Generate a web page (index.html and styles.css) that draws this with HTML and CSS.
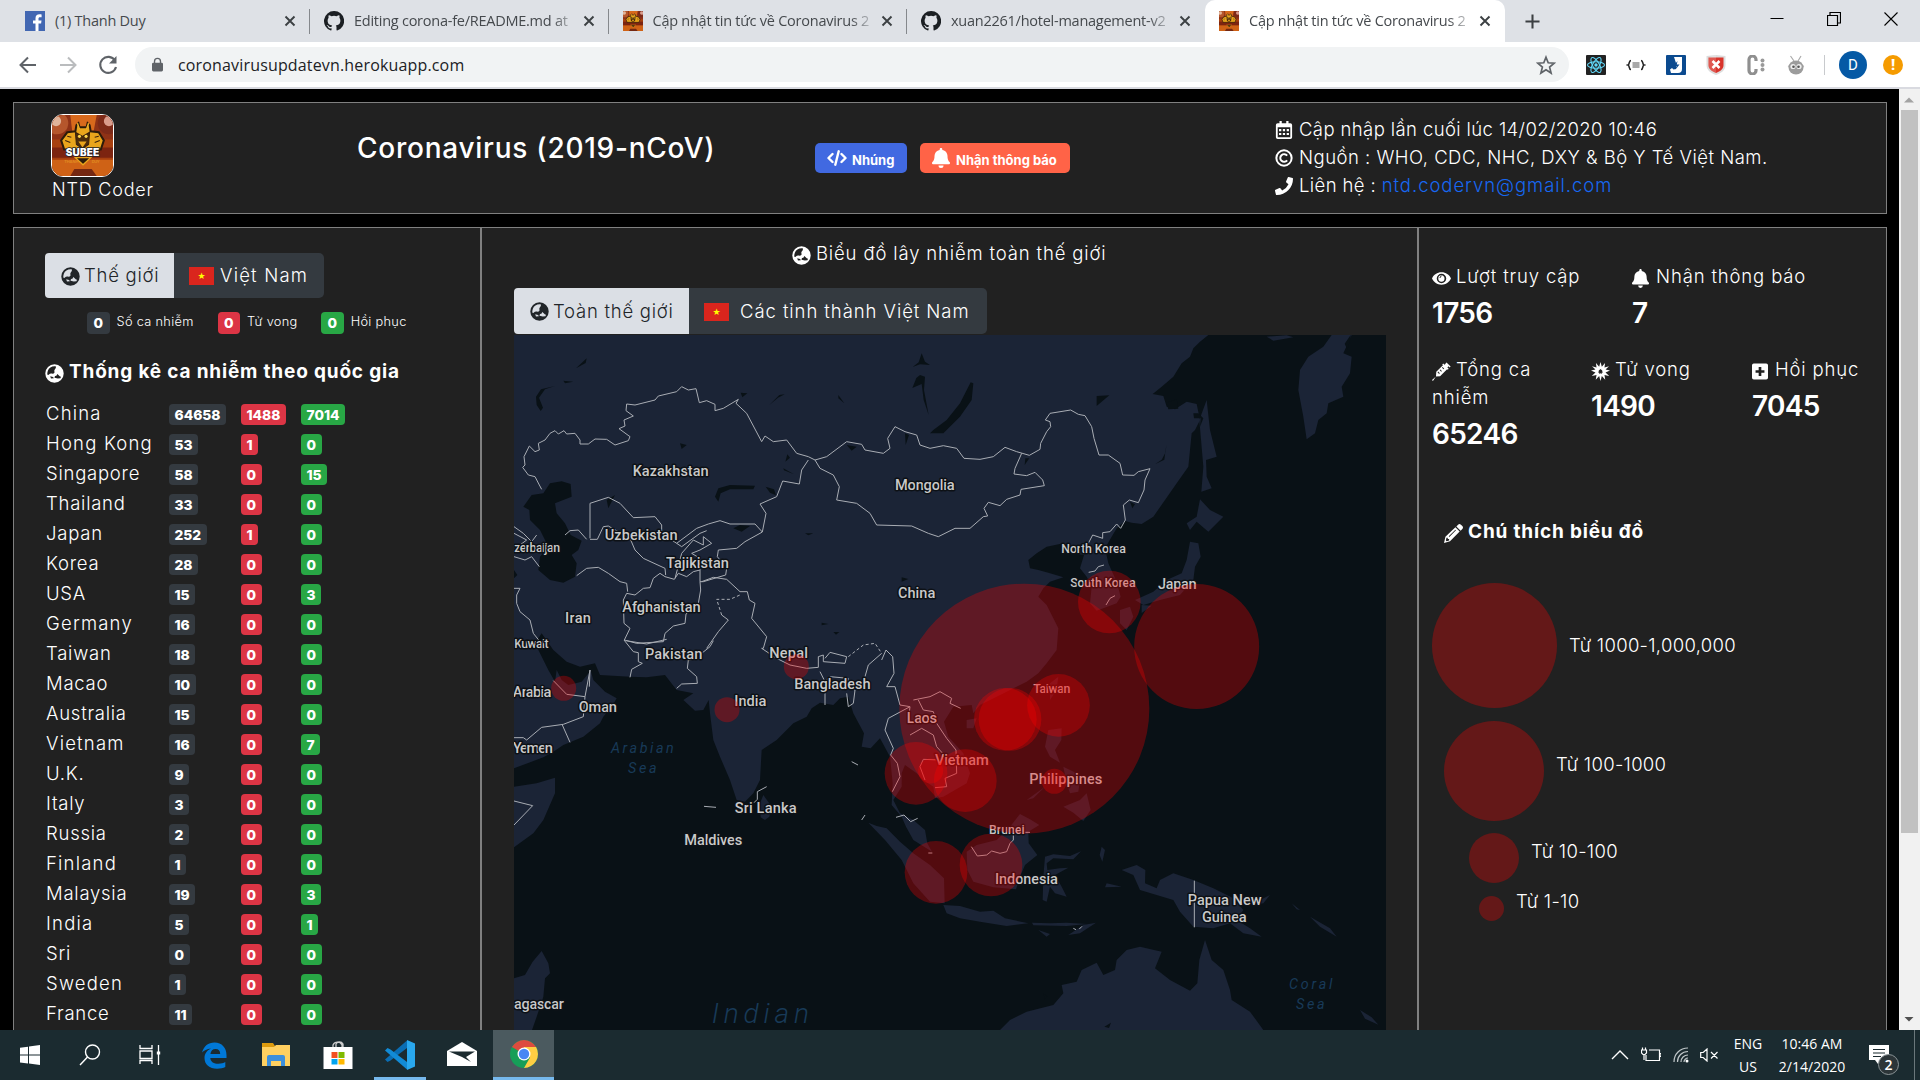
FILE: index.html
```html
<!DOCTYPE html>
<html lang="vi">
<head>
<meta charset="utf-8">
<title>Cập nhật tin tức về Coronavirus 2019</title>
<link rel="stylesheet" href="styles.css">
</head>
<body>
<svg class="defs" width="0" height="0">
  <symbol id="globe" viewBox="0 0 20 20"><path fill-rule="evenodd" d="M10 .3a9.700 9.700 0 1 0 0 19.400A9.700 9.700 0 0 0 10 .3zM11.500 2.600C11.800 5 10 5.300 9.700 7.300 10.800 8.500 9.500 10.300 8 10.200 6.500 9.500 5 10 3.800 11.400 2.300 12.500 2 9.800 3 7 4.300 4 7.500 2 11.500 2.600zM13 10.500l2.500 2.400 1.300.6-.5 1.500-2.800.2-3.500-.7.5-1.800 1.500-.3zM5.500 13l3 .7.8 1.300-3 .2z"/></symbol>
  <symbol id="calendar" viewBox="0 0 18 20"><path fill-rule="evenodd" d="M4 0h2.500v2.500h5V0H14v2.500h2a2 2 0 0 1 2 2V18a2 2 0 0 1-2 2H2a2 2 0 0 1-2-2V4.500a2 2 0 0 1 2-2h2zM2 7v11h14V7zM3.500 9H6v2.300H3.500zM7.700 9h2.500v2.300H7.700zM12 9h2.500v2.300H12zM3.500 13.300H6v2.300H3.500zM7.700 13.300h2.500v2.300H7.700zM12 13.300h2.500v2.300H12z"/></symbol>
  <symbol id="copy" viewBox="0 0 20 20"><g fill="none" stroke="currentColor" stroke-width="2.200"><circle cx="10" cy="10" r="8.500"/><path d="M13.500 7.300a4.300 4.300 0 1 0 0 5.400"/></g></symbol>
  <symbol id="phone" viewBox="0 0 20 20"><path d="M19.400 1 15.300 0a1 1 0 0 0-1.100.6l-1.900 4.300a1 1 0 0 0 .3 1.100L15 8A14.500 14.500 0 0 1 8 15l-2-2.400a1 1 0 0 0-1.100-.3L.6 14.200A1 1 0 0 0 0 15.300l1 4.100a1 1 0 0 0 .9.600A18 18 0 0 0 20 2a1 1 0 0 0-.6-1z"/></symbol>
  <symbol id="bell" viewBox="0 0 18 20"><path d="M9 20a2.500 2.500 0 0 0 2.500-2.500h-5A2.500 2.500 0 0 0 9 20zm8.700-5.800c-.8-.8-2.200-2-2.200-6.100 0-3-2.100-5.400-5.200-6V1.200a1.300 1.300 0 0 0-2.600 0v.9c-3.100.6-5.200 3-5.200 6 0 4.100-1.400 5.300-2.200 6.100-.8 1 .1 2.100 1 2.100h15.400c.9 0 1.800-1.100 1-2.100z"/></symbol>
  <symbol id="code" viewBox="0 0 20 16"><g fill="none" stroke="currentColor" stroke-width="2.400" stroke-linecap="round" stroke-linejoin="round"><path d="M5.500 4 1.500 8l4 4M14.500 4l4 4-4 4M11.700 1.300 8.300 14.700"/></g></symbol>
  <symbol id="eye" viewBox="0 0 20 14"><path fill-rule="evenodd" d="M10 .5C5.500.5 1.800 3 0 7c1.800 4 5.500 6.500 10 6.500S18.200 11 20 7C18.200 3 14.500.5 10 .5zM10 2a5 5 0 1 1 0 10 5 5 0 0 1 0-10zM9.800 3.700a3.300 3.300 0 1 0 3.400 3.600c.1-2-1.400-3.600-3.400-3.600a1.800 1.800 0 0 1-2.200 2.400"/></symbol>
  <symbol id="syringe" viewBox="0 0 20 20"><path fill-rule="evenodd" d="m15.300.4 4.300 4.300-1 1-1.200-1.100-1.200 1.200 1.400 1.400-1 1-.7-.7-7.400 7.500-4.400.3L1 20l-1-1 4.200-3.700.3-5 7-7-.7-.7 1-1 1.400 1.400 1.200-1.200L14.300 1.400zM8 8.500l1.700 1.700.7-.7-1.700-1.700zM10.500 6l1.700 1.700.7-.7-1.700-1.700zM5.800 10.800l1.700 1.700.7-.7-1.700-1.700z"/></symbol>
  <symbol id="virus" viewBox="0 0 20 20"><path fill-rule="evenodd" d="m10 0 1.400 5L14.800 1l-.6 4.800L19 4.500 15.300 8l4.700 1-4.700 2 3.900 3.700-5-1 .8 5-3.600-3.900L10 20l-1.400-5.200L5 18.700l.8-5-5 1L4.700 11 0 9l4.700-1L1 4.500l4.800 1.300L5.200 1l3.400 4zM9.300 7.200v1.200L8 8.600l.5 1L7.300 10.700l1.400.5v1.400l1.300-.8 1.300.8v-1.400l1.400-.5-1.200-1.100.5-1-1.300-.2V7.200L10 8z"/></symbol>
  <symbol id="plusbox" viewBox="0 0 18 18"><path fill-rule="evenodd" d="M2 0h14a2 2 0 0 1 2 2v14a2 2 0 0 1-2 2H2a2 2 0 0 1-2-2V2a2 2 0 0 1 2-2zm5.500 4v3.500H4v3h3.500V14h3v-3.500H14v-3h-3.500V4z"/></symbol>
  <symbol id="pencil" viewBox="0 0 20 20"><path fill-rule="evenodd" d="M14.800.7a2.200 2.200 0 0 1 3 0l1.500 1.500a2.200 2.200 0 0 1 0 3L17.500 7 13 2.500zM12 3.500 16.500 8 6.300 18.200 0 20l1.500-6.500zM2.600 14.600 2 17.300l.8.8 2.600-.7v-1.600H4v-1.200zM12 6l-7 7 .6.600 7-7z"/></symbol>
  <symbol id="github" viewBox="0 0 16 16"><path d="M8 0a8 8 0 0 0-2.530 15.590c.4.070.55-.17.55-.38v-1.340c-2.230.48-2.700-1.070-2.700-1.070-.360-.92-.89-1.170-.89-1.170-.73-.5.060-.49.060-.49.8.06 1.230.83 1.230.83.71 1.220 1.870.87 2.330.66.070-.52.280-.87.5-1.070-1.780-.2-3.640-.89-3.640-3.950 0-.870.310-1.590.82-2.150-.080-.2-.36-1.020.08-2.120 0 0 .67-.21 2.200.82a7.600 7.600 0 0 1 4 0c1.530-1.040 2.200-.82 2.200-.82.44 1.100.16 1.920.08 2.120.51.56.82 1.270.82 2.150 0 3.070-1.870 3.750-3.650 3.950.29.25.54.73.54 1.480v2.200c0 .21.15.46.55.38A8 8 0 0 0 8 0z"/></symbol>
  <symbol id="bee" viewBox="0 0 60 60"><rect width="60" height="60" fill="#a8400f"/><path d="M0 0h60v24H0z" fill="#8f3216"/><circle cx="5" cy="8" r="11" fill="#b5562c"/><circle cx="4" cy="6" r="5" fill="#e0b49a"/><circle cx="56" cy="8" r="11" fill="#7d2a18"/><circle cx="56" cy="6" r="5" fill="#d99c8c"/><path d="M18 0h26l-5 26H21z" fill="#d8691c"/><path d="M0 32h60v10H0z" fill="#7c2410"/><path d="M0 44h60v16H0z" fill="#cf6216"/><path d="M22 53h17l5 7H18z" fill="#742812"/><path d="M15 17l8-1 1-6 2-2 1 4h7l1-4 2 2 1 6 8 1 5 8-3 9H12l-3-9z" fill="#e9a51c" stroke="#2c1b0a" stroke-width="2"/><path d="M25 8l2 6m9-6-2 6" stroke="#efb02a" stroke-width="1.500"/><path d="M23 17l7 4 7-4-1 12-6 4-6-4zM13 25l5 2m24 0l5-2M15 21l4 1m23 0l4-1" fill="#4b2b0a" stroke="#3a220c"/><path d="M26 26h8l-4 6z" fill="#e9a51c"/><circle cx="27" cy="21" r="1.500" fill="#ffd64a"/><circle cx="33.500" cy="21" r="1.500" fill="#ffd64a"/><path d="M23 42h15l-7.500 7z" fill="#2c1b0a" stroke="#e9a51c" stroke-width="1.300"/></symbol>
  <symbol id="x" viewBox="0 0 12 12"><path d="m1.500 1.500 9 9m0-9-9 9" stroke="currentColor" stroke-width="1.900"/></symbol>
</svg>

<header class="tabstrip">
  <div class="tab"><svg class="fav" viewBox="0 0 20 20"><rect width="20" height="20" fill="#4267b2"/><path d="M13.500 20v-7.500h2.600l.4-3h-3V7.700c0-1 .3-1.500 1.500-1.500h1.600V3.400c-4.100-.6-6.100.6-6.100 3.900v2.200H8v3h2.500V20z" fill="#fff"/></svg><span class="tab-title">(1) Thanh Duy</span><svg class="close"><use href="#x"/></svg></div>
  <div class="tab"><svg class="fav"><use href="#github"/></svg><span class="tab-title fade">Editing corona-fe/README.md at</span><svg class="close"><use href="#x"/></svg></div>
  <div class="tab"><svg class="fav"><use href="#bee"/></svg><span class="tab-title fade">Cập nhật tin tức về Coronavirus 2</span><svg class="close"><use href="#x"/></svg></div>
  <div class="tab last"><svg class="fav"><use href="#github"/></svg><span class="tab-title fade">xuan2261/hotel-management-v2</span><svg class="close"><use href="#x"/></svg></div>
  <div class="tab active"><svg class="fav"><use href="#bee"/></svg><span class="tab-title fade">Cập nhật tin tức về Coronavirus 2</span><svg class="close"><use href="#x"/></svg></div>
  <svg class="newtab" viewBox="0 0 16 16"><path d="M8 .5v15M.5 8h15" stroke="#3c4043" stroke-width="2.200"/></svg>
  <div class="winctl">
    <svg viewBox="0 0 14 14"><path d="M.5 6.500h13" stroke="#000"/></svg>
    <svg viewBox="0 0 14 14"><path d="M.5 3.500h10v10H.5zM3 3.500v-3h10.500v10.500H10.500" fill="none" stroke="#000" stroke-width="1.200"/></svg>
    <svg viewBox="0 0 14 14"><path d="m.5.5 13 13m0-13-13 13" stroke="#000" stroke-width="1.100"/></svg>
  </div>
</header>

<nav class="toolbar">
  <svg class="nav" viewBox="0 0 20 20"><path d="M18 10H3m7-7.500L2.500 10l7.500 7.500" fill="none" stroke="#5f6368" stroke-width="2"/></svg>
  <svg class="nav" viewBox="0 0 20 20"><path d="M2 10h15m-7-7.500 7.500 7.500-7.500 7.500" fill="none" stroke="#babcbe" stroke-width="2"/></svg>
  <svg class="nav" viewBox="0 0 20 20"><path d="M17 5.500A8 8 0 1 0 18 12" fill="none" stroke="#5f6368" stroke-width="2.100"/><path d="M18.500 1v7.500H11z" fill="#5f6368"/></svg>
  <div class="omnibox">
    <svg class="lock" viewBox="0 0 12 15"><path fill-rule="evenodd" d="M1.500 5.500H2V4a4 4 0 0 1 8 0v1.500h.5A1.500 1.500 0 0 1 12 7v6.500a1.500 1.500 0 0 1-1.500 1.500h-9A1.500 1.500 0 0 1 0 13.500V7a1.500 1.500 0 0 1 1.500-1.500zm2 0h5V4a2.500 2.500 0 0 0-5 0z" fill="#5f6368"/></svg>
    <span class="url">coronavirusupdatevn.herokuapp.com</span>
    <svg class="star" viewBox="0 0 20 20"><path d="m10 2.200 2.200 5.600 6 .4-4.600 3.900 1.500 5.900-5.100-3.300L4.900 18l1.500-5.900L1.800 8.200l6-.4z" fill="none" stroke="#5f6368" stroke-width="1.700"/></svg>
  </div>
  <div class="exts">
    <svg viewBox="0 0 20 20"><rect width="20" height="20" rx="1" fill="#222"/><g fill="none" stroke="#61dafb" stroke-width="1.100"><ellipse cx="10" cy="10" rx="8.500" ry="3.300"/><ellipse cx="10" cy="10" rx="8.500" ry="3.300" transform="rotate(60 10 10)"/><ellipse cx="10" cy="10" rx="8.500" ry="3.300" transform="rotate(120 10 10)"/></g><circle cx="10" cy="10" r="1.700" fill="#61dafb"/></svg>
    <svg viewBox="0 0 20 20"><path d="M5 5.500c-2.500 0-1 3.800-3 4.500 2 .7.500 4.500 3 4.500M15 5.500c2.500 0 1 3.800 3 4.500-2 .7-.5 4.500-3 4.500" fill="none" stroke="#222" stroke-width="1.600"/><path d="M6.500 8h7M6.500 10h7M6.500 12h7" stroke="#555" stroke-width="1.200"/></svg>
    <svg viewBox="0 0 20 20"><rect width="20" height="20" rx="1" fill="#0b4a8f"/><path d="M8 2h8v12a4 4 0 0 1-4 4H5l-1-3.500 2-1.500 1.500 1.500 2.500-.5V8z" fill="#fff"/><path d="m11.500 6-4 5h3l-1 3.500 4-5h-2.700z" fill="#0b4a8f"/></svg>
    <svg viewBox="0 0 20 20"><path d="M.5 1 10 0l9.500 1v9c0 5-4 8-9.500 10C4.500 18 .5 15 .5 10z" fill="#ddd"/><path d="M2.500 2.500h15V10c0 4-3 6.300-7.500 8-4.500-1.700-7.500-4-7.500-8z" fill="#d8342b"/><path d="M10 0v18c-4.500-1.700-7.500-4-7.500-8V2.500z" fill="#fff" opacity=".18"/><path d="m6.500 6 7 7m0-7-7 7" stroke="#fff" stroke-width="2.500"/></svg>
    <svg viewBox="0 0 20 20"><path d="M10 6V4.500a3 3 0 0 0-7 0v11a3 3 0 0 0 7 0V14" fill="none" stroke="#8f8f8f" stroke-width="3.200"/><g fill="#999"><circle cx="16.500" cy="5.500" r="2"/><circle cx="16.500" cy="10" r="2"/><circle cx="16.500" cy="14.500" r="2"/></g></svg>
    <svg viewBox="0 0 20 20"><path d="m4.500 1 3.500 5m7-5L12 6M2 11l3 1m13-1-3 1" stroke="#aaa" stroke-width="1.200"/><ellipse cx="10" cy="12.500" rx="7.500" ry="7" fill="#9c9c9c"/><circle cx="7" cy="11.500" r="2.600" fill="#eee"/><circle cx="13" cy="11.500" r="2.600" fill="#eee"/><circle cx="7.500" cy="11.700" r="1.300" fill="#555"/><circle cx="12.500" cy="11.700" r="1.300" fill="#555"/></svg>
  </div>
  <i class="tb-sep"></i>
  <b class="avatar">D</b>
  <b class="warn">!</b>
</nav>

<main class="viewport">
  <div class="page">
    <section class="banner">
      <div class="brand"><svg class="logo" viewBox="0 0 60 60"><use href="#bee" width="60" height="60"/><text x="30" y="40" class="logo-name" text-anchor="middle" textLength="33">SUBEE</text><text x="12" y="47.500" class="logo-sub" textLength="14">THANH</text><text x="39" y="47.500" class="logo-sub" textLength="8">DUY</text></svg><span>NTD Coder</span></div>
      <h1>Coronavirus (2019-nCoV)</h1>
      <div class="actions"><a class="btn blue"><svg><use href="#code"/></svg>Nhúng</a><a class="btn tomato"><svg><use href="#bell"/></svg>Nhận thông báo</a></div>
      <div class="info">
        <p><svg><use href="#calendar"/></svg><span>Cập nhập lần cuối lúc 14/02/2020 10:46</span></p>
        <p><svg><use href="#copy"/></svg><span class="source">Nguồn : WHO, CDC, NHC, DXY &amp; Bộ Y Tế Việt Nam.</span></p>
        <p><svg><use href="#phone"/></svg><span>Liên hệ : <a>ntd.codervn@gmail.com</a></span></p>
      </div>
    </section>

    <section class="board">
      <aside class="col left">
        <div class="switch"><a class="on"><svg class="ic"><use href="#globe"/></svg>Thế giới</a><a class="off vn"><i class="flag">★</i>Việt Nam</a></div>
        <div class="legend"><b class="bd g">0</b><span class="k1">Số ca nhiễm</span><b class="bd r">0</b><span class="k2">Tử vong</span><b class="bd v">0</b><span>Hồi phục</span></div>
        <h2><svg class="ic"><use href="#globe"/></svg>Thống kê ca nhiễm theo quốc gia</h2>
        <div class="stats">
          <span>China</span><b class="bd g">64658</b><b class="bd r">1488</b><b class="bd v">7014</b>
          <span>Hong Kong</span><b class="bd g">53</b><b class="bd r">1</b><b class="bd v">0</b>
          <span class="tight">Singapore</span><b class="bd g">58</b><b class="bd r">0</b><b class="bd v">15</b>
          <span class="tight">Thailand</span><b class="bd g">33</b><b class="bd r">0</b><b class="bd v">0</b>
          <span class="tight">Japan</span><b class="bd g">252</b><b class="bd r">1</b><b class="bd v">0</b>
          <span class="tight">Korea</span><b class="bd g">28</b><b class="bd r">0</b><b class="bd v">0</b>
          <span class="tight">USA</span><b class="bd g">15</b><b class="bd r">0</b><b class="bd v">3</b>
          <span>Germany</span><b class="bd g">16</b><b class="bd r">0</b><b class="bd v">0</b>
          <span class="tight">Taiwan</span><b class="bd g">18</b><b class="bd r">0</b><b class="bd v">0</b>
          <span class="tight">Macao</span><b class="bd g">10</b><b class="bd r">0</b><b class="bd v">0</b>
          <span class="tight">Australia</span><b class="bd g">15</b><b class="bd r">0</b><b class="bd v">0</b>
          <span>Vietnam</span><b class="bd g">16</b><b class="bd r">0</b><b class="bd v">7</b>
          <span class="tight">U.K.</span><b class="bd g">9</b><b class="bd r">0</b><b class="bd v">0</b>
          <span class="tight">Italy</span><b class="bd g">3</b><b class="bd r">0</b><b class="bd v">0</b>
          <span class="tight">Russia</span><b class="bd g">2</b><b class="bd r">0</b><b class="bd v">0</b>
          <span>Finland</span><b class="bd g">1</b><b class="bd r">0</b><b class="bd v">0</b>
          <span class="tight">Malaysia</span><b class="bd g">19</b><b class="bd r">0</b><b class="bd v">3</b>
          <span>India</span><b class="bd g">5</b><b class="bd r">0</b><b class="bd v">1</b>
          <span class="tight">Sri</span><b class="bd g">0</b><b class="bd r">0</b><b class="bd v">0</b>
          <span>Sweden</span><b class="bd g">1</b><b class="bd r">0</b><b class="bd v">0</b>
          <span class="tight">France</span><b class="bd g">11</b><b class="bd r">0</b><b class="bd v">0</b>
        </div>
      </aside>

      <div class="col mid">
        <p class="map-title"><svg class="ic"><use href="#globe"/></svg>Biểu đồ lây nhiễm toàn thế giới</p>
        <div class="switch"><a class="on wide"><svg class="ic"><use href="#globe"/></svg>Toàn thế giới</a><a class="off prov"><i class="flag">★</i>Các tỉnh thành Việt Nam</a></div>
        <svg class="map" viewBox="42 345 2616 2085">
          <rect class="sea" x="42" y="345" width="2616" height="2085"/>
          <g class="land">
            <path d="M42 345H2125L2100 365 2080 385 2070 410 2045 430 2020 470 1985 500 1958 522 1990 528 2000 560 2025 568 2060 545 2090 552 2100 600 2085 630 2075 640 2070 690 2065 740 2030 790 1995 840 1960 890 1925 912 1895 908 1875 903 1850 925 1835 950 1815 985 1825 1030 1850 1085 1862 1130 1850 1150 1790 1172 1770 1150 1775 1100 1760 1070 1740 1045 1752 1005 1720 1000 1690 970 1640 980 1610 1000 1585 1020 1590 1045 1615 1050 1650 1060 1690 1072 1650 1085 1630 1105 1615 1130 1640 1155 1660 1195 1675 1225 1670 1290 1640 1330 1615 1360 1580 1385 1520 1415 1440 1455 1420 1480 1415 1455 1360 1460 1332 1505 1345 1550 1390 1600 1410 1660 1400 1690 1330 1730 1305 1735 1300 1700 1270 1680 1250 1660 1215 1635 1205 1660 1205 1700 1180 1740 1200 1780 1240 1800 1275 1830 1282 1870 1296 1895 1240 1860 1218 1820 1205 1790 1175 1755 1178 1690 1170 1610 1140 1555 1112 1585 1085 1580 1092 1540 1060 1480 1045 1430 1020 1435 1000 1455 960 1448 935 1465 920 1490 880 1510 830 1560 785 1590 780 1680 760 1720 735 1745 710 1740 690 1680 660 1610 640 1560 630 1480 626 1440 610 1470 585 1472 550 1440 580 1420 530 1410 495 1365 440 1372 390 1370 300 1365 285 1330 240 1340 200 1325 160 1290 125 1240 105 1270 120 1300 145 1350 165 1385 170 1350 185 1380 205 1395 245 1385 272 1352 280 1380 315 1415 350 1435 335 1460 310 1490 300 1510 250 1550 190 1575 160 1595 130 1612 42 1645z"/>
            <path d="M42 1700 110 1690 165 1673 165 1720 130 1800 100 1840 42 1882zM42 2275 75 2265 98 2225 125 2193 145 2230 150 2260 135 2275 130 2330 110 2390 96 2430H42z"/>
            <path d="M790 1725 815 1760 808 1790 795 1800 782 1792 780 1750zM1105 1808 1130 1818 1160 1825 1200 1865 1240 1900 1290 1935 1332 1975 1334 2050 1290 2045 1240 1990 1205 1920 1155 1860zM1330 2055 1380 2058 1440 2075 1480 2072 1515 2095 1585 2110 1520 2118 1440 2105 1380 2095 1340 2080zM1596 2108 1650 2110 1700 2108 1760 2112 1700 2118 1600 2116zM1705 2145 1750 2115 1788 2108 1740 2140zM1615 2130l35 12-10 8z"/>
            <path d="M1400 1895 1430 1875 1490 1860 1530 1820 1560 1782 1590 1798 1618 1815 1585 1835 1586 1870 1612 1905 1575 1935 1560 1970 1548 2008 1480 2002 1420 1985 1402 1950zM1635 1910 1660 1903 1710 1908 1743 1894 1720 1918 1660 1915 1640 1930 1642 1950 1680 1945 1705 1943 1665 1965 1685 2000 1700 2030 1665 2020 1650 2000 1640 2045 1628 2040 1630 1970z"/>
            <path d="M1645 1530 1685 1525 1684 1560 1665 1590 1680 1628 1650 1610 1635 1580zM1690 1760 1740 1740 1760 1720 1772 1770 1750 1803 1720 1778zM1580 1740 1635 1700 1600 1735zM1690 1640l40 20-10 30-25-25zM1700 1690l40-10-5 35-25 5z"/>
            <path d="M1865 1950 1910 1935 1936 1950 1935 1990 1970 2005 1980 1980 2020 1960 2080 1980 2140 2005 2200 2035 2230 2070 2210 2100 2250 2125 2285 2150 2230 2140 2190 2110 2140 2125 2080 2120 2040 2075 2020 2040 1970 2025 1920 2010 1900 1965zM1805 1880l10 10-8 35-8-20zM1820 1990l45 10-50 2zM2270 2045l40-20-20 25-35 5zM2375 2050l25 20-10-2zM2430 2090l60 35 20 25-50-30zM2580 2370l35 22 20 22-40-18z"/>
            <path d="M1500 2430 1530 2400 1580 2375 1660 2355 1690 2320 1685 2295 1730 2285 1745 2250 1790 2228 1810 2265 1845 2250 1850 2220 1880 2190 1920 2180 1985 2195 1965 2245 2010 2280 2070 2312 2092 2290 2098 2220 2115 2160 2135 2220 2170 2250 2190 2310 2195 2340 2250 2375 2290 2430z"/>
            <path d="M2100 838 2130 870 2170 890 2125 935 2090 905 2070 930 2060 910 2090 890zM2070 965 2095 970 2102 1010 2085 1040 2080 1080 2040 1125 1980 1140 1930 1155 1905 1140 1960 1115 2000 1080 2045 1060 2060 1020zM1860 1170l30-10 10 30-20 40-20-20zM1925 1155l30 2-30 22zM2120 540 2130 630 2150 710 2118 720 2120 770 2135 805 2104 815 2110 740 2098 600zM2495 345H2555L2530 400 2555 410 2550 460 2525 500 2530 530 2485 550 2480 580 2455 600 2445 640 2420 658 2410 590 2395 510 2400 450 2425 410 2470 380zM2300 350l60-4 20 6-60 10zM1650 1390 1675 1370 1670 1410 1650 1440zM1400 1500 1430 1495 1420 1525 1400 1525z"/>
          </g>
          <g class="lake">
            <path d="M150 790 185 784 212 792 215 830 165 850 170 880 195 910 212 945 245 962 235 990 215 1005 230 1030 225 1070 190 1088 150 1080 115 1050 120 1010 145 980 120 930 90 900 88 870 70 860 95 825 130 820zM1412 487 1420 490 1415 540 1380 590 1330 640 1290 640 1300 630 1340 600 1380 550zM645 830 655 805 690 795 765 797 760 808 690 808 662 820 655 845zM700 925 720 915 750 918 725 935zM320 840 345 825 325 865zM1040 675 1070 680 1055 692zM1215 640l12 5-10 30zM850 745l32 18-30-12zM862 703l8 10-14 12zM797 800l25 8 6 18-18-8zM122 573l-12-18-2-25 15-22 42-10-30 10-18 25 12 30zM228 445l32-30-3 14zM190 482l30 3-25 5zM808 555l30-30 16-2-20 10zM1260 465l15 5-3 40 14 75-15-45-6-48-28 12 12-30zM1265 400l10 25 15 10-30-2-22 8 18-14zM1015 525l18 25-18-15zM722 518l20 2-15 12zM540 670l20 5-15 12zM1790 528l38-2-38 32zM1965 733l20-14 12-22 2-22-6 44zM1576 715l12 0-14 20zM1890 845l15 8-8 12zM2552 345l-18 26 8 18 10-36zM42 1050l10 15-10 10zM1630 2320l12 10-8 8zM1813 2420l20-12-6 16z"/>
            <path d="M2000 548l30-10 5 28-30 2zM2080 580l15 0 15 15-10 25 2-25-20 0zM1205 1072l20 5-20 8zM915 940l25 0-15 6zM965 1208l20 4-20 4zM1000 1236l18 0-10 8z"/>
          </g>
          <g class="border">
            <path d="M125 808 118 795 105 770 85 765 68 742 75 735 72 710 88 678 105 695 118 690 115 670 135 660 150 640 165 632 175 642 192 632 200 642 225 640 240 660 240 672 265 672 285 657 320 658 345 675 385 662 390 650 357 626 375 618 372 600 400 588 378 572 380 552 405 555 465 540 475 528 530 515 545 500 565 510 588 506 598 548 620 542 645 553 645 572 670 565 715 538 708 550 740 580 785 665 795 648 820 665 860 660 890 700 925 710 945 720 980 710 1040 665 1085 673 1095 690 1150 700 1170 685 1163 655 1185 620 1215 635 1250 645 1260 675 1290 685 1330 677 1370 685 1392 715 1440 718 1480 710 1515 682 1550 695 1588 706 1620 688 1622 670 1640 635 1652 620 1650 605 1636 600 1650 580 1712 570 1735 583 1755 587 1775 620 1782 655 1797 705 1825 705 1860 730 1868 765 1902 766 1915 755 1950 746 1935 780 1932 810 1915 848 1888 840 1870 855 1876 900 1862 925 1850 912 1830 935 1808 938 1808 955 1778 945 1765 970"/>
            <path d="M945 720 960 745 1000 765 1018 800 1010 840 1070 850 1110 880 1130 915 1235 918 1285 940 1315 950 1365 925 1410 925 1450 890 1463 888 1452 865 1465 847 1500 857 1520 838 1560 825 1563 808 1633 797 1628 780 1605 757 1580 767 1542 762 1545 745 1565 700"/>
            <path d="M925 720 905 750 898 792 848 783 830 830 780 852 798 880 787 936 735 965 710 985 655 990 652 1010 680 1045 677 1065 610 1085 600 1085 602 1110 595 1150 558 1182 555 1210 520 1218 495 1240 490 1265 410 1270 373 1260 390 1225 372 1210 370 1140 380 1120 405 1125 430 1105 450 1103 460 1075 480 1060 495 1070 523 1078 535 1060 560 1070 580 1055 600 1050 600 1085M605 1085 640 1072 680 1078 720 1115 742 1115 748 1140 765 1150 755 1195 800 1250 790 1285 785 1285 830 1315 870 1335 920 1345 955 1342 955 1310 970 1305 970 1325 1035 1330 1040 1310 990 1297 975 1315M270 955V850L325 832 360 850 400 893 465 890 485 915 485 940 530 970 590 925 625 912 660 902 690 912 765 912 787 936M270 958H292L310 920 325 918 390 955 405 990 430 1015 495 1045 497 1065M195 945 210 932 235 930 260 958M230 1067 260 1045 295 1042 325 1060 360 1085 380 1090 383 1115M530 970 545 980 600 940 620 932M545 1000 580 960 610 975 610 950 635 970 600 990 575 1000 600 1015 600 1050M525 1075 545 1000"/>
            <path d="M372 1260 400 1295 415 1298 415 1325 427 1330 395 1348 390 1372M378 1262 440 1272 500 1258M640 1262 630 1280 605 1300 605 1315 565 1320 562 1345 590 1370 592 1390 545 1392 530 1405M620 1285 655 1235 685 1200 665 1185"/>
            <path d="M42 1105 60 1105 50 1125 50 1150 60 1175 90 1200 100 1240 120 1265M42 920 70 940 95 965 110 945M42 1010 75 1020 95 1010 118 1040M42 940 80 960 60 975M160 1382 200 1423 255 1430 270 1350 268 1400M255 1430 250 1490 190 1513 125 1522 80 1560 70 1553 42 1553M187 1515 210 1567M42 1743 98 1757 42 1815"/>
            <path d="M960 1355 975 1385 990 1370 1045 1375 1040 1400 1065 1410 1060 1450 1045 1460 1040 1420M975 1385 960 1400 975 1420 975 1455M1145 1300 1105 1335 1095 1370M1145 1320 1158 1290 1178 1310 1182 1360 1160 1400 1185 1400 1200 1455 1230 1460 1225 1500M1230 1460 1165 1495 1155 1530 1180 1585 1172 1605 1192 1630 1200 1670 1177 1715M1240 1440 1290 1430 1320 1415 1355 1435 1350 1450 1382 1465M1255 1440 1270 1470 1300 1475 1310 1510 1340 1555 1368 1590 1370 1660 1335 1675 1340 1700 1305 1703M1230 1545 1265 1525 1300 1545 1310 1580 1328 1600 1320 1620 1270 1618 1260 1640 1275 1680"/>
            <path d="M800 1700 772 1715 772 1738 762 1748M612 1759 648 1762M1055 1625 1074 1635M1085 1800 1095 1785M1188 1792 1212 1785 1232 1805 1253 1795M1285 1899h12M1414 1880 1432 1908 1460 1905 1475 1893 1500 1900 1520 1895 1530 1870 1540 1860V1835M1570 1837h20M2083 1982V2122M1766 1057 1785 1053 1795 1040 1812 1035M1818 1155 1830 1135 1845 1127M1720 2125l8 4m10-2l8-8"/>
            <path d="M1045 1310 1090 1275 1125 1270 1145 1300M665 1185 650 1138 690 1138 720 1125" stroke-dasharray="9 7"/>
          </g>
          <g class="lb">
            <text x="398" y="768" textLength="228">Kazakhstan</text><text x="1185" y="810" textLength="179">Mongolia</text><text x="314" y="961" textLength="219">Uzbekistan</text><text x="498" y="1043" textLength="189">Tajikistan</text><text x="367" y="1177" textLength="235">Afghanistan</text><text x="195" y="1208" textLength="78">Iran</text><text x="1194" y="1133" textLength="112">China</text>
            <text class="s" x="43" y="997" textLength="137">zerbaijan</text><text class="s" x="43" y="1284" textLength="103">Kuwait</text><text class="s" x="1684" y="998" textLength="194">North Korea</text><text class="s" x="1711" y="1102" textLength="196">South Korea</text><text x="1974" y="1108" textLength="116">Japan</text>
            <text x="435" y="1316" textLength="172">Pakistan</text><text x="808" y="1314" textLength="116">Nepal</text><text x="883" y="1408" textLength="229">Bangladesh</text><text x="38" y="1430" textLength="116">Arabia</text><text x="236" y="1476" textLength="115">Oman</text><text x="703" y="1457" textLength="96">India</text><text x="38" y="1599" textLength="121">Yemen</text><text x="704" y="1780" textLength="186">Sri Lanka</text><text x="553" y="1875" textLength="174">Maldives</text><text x="1220" y="1509" textLength="91">Laos</text><text x="1305" y="1635" textLength="161">Vietnam</text><text class="s" x="1600" y="1418" textLength="111">Taiwan</text><text x="1588" y="1691" textLength="219">Philippines</text><text class="s" x="1467" y="1843" textLength="107">Brunei</text><text x="1485" y="1992" textLength="189">Indonesia</text><text x="2063" y="2056" textLength="222">Papua New</text><text x="2106" y="2107" textLength="134">Guinea</text><text x="42" y="2366" textLength="150">agascar</text>
          </g>
          <g class="water"><text x="333" y="1600" textLength="188">Arabian</text><text x="384" y="1659" textLength="86">Sea</text><text x="2367" y="2308" textLength="130">Coral</text><text x="2388" y="2367" textLength="86">Sea</text><text class="ocean" x="635" y="2409" textLength="292">Indian</text></g>
          <g class="cases"><circle cx="1573" cy="1466" r="375"/><circle cx="2090" cy="1279.500" r="187.500"/><circle cx="1828" cy="1146" r="94"/><circle cx="1675.500" cy="1456" r="94"/><circle cx="1530" cy="1498" r="94"/><circle cx="1516" cy="1498" r="94"/><circle cx="1663" cy="1684" r="37.500"/><circle cx="1396" cy="1682" r="94"/><circle cx="1248" cy="1660" r="94"/><circle cx="1292" cy="1653" r="37.500"/><circle cx="1308" cy="1957" r="94"/><circle cx="1473" cy="1935" r="94"/><circle cx="889" cy="1340" r="37.500"/><circle cx="681" cy="1469" r="37.500"/><circle cx="191" cy="1405" r="37.500"/></g>
        </svg>
      </div>

      <aside class="col right">
        <div class="two">
          <div><p><svg class="ic"><use href="#eye"/></svg>Lượt truy cập</p><strong>1756</strong></div>
          <div><p><svg class="ic bellic"><use href="#bell"/></svg>Nhận thông báo</p><strong>7</strong></div>
        </div>
        <div class="three">
          <div><p><svg class="ic"><use href="#syringe"/></svg>Tổng ca<br>nhiễm</p><strong>65246</strong></div>
          <div><p><svg class="ic"><use href="#virus"/></svg>Tử vong</p><strong>1490</strong></div>
          <div><p><svg class="ic plus"><use href="#plusbox"/></svg>Hồi phục</p><strong>7045</strong></div>
        </div>
        <h2><svg class="ic"><use href="#pencil"/></svg>Chú thích biểu đồ</h2>
        <div class="key a"><i></i><span>Từ 1000-1,000,000</span></div>
        <div class="key b"><i></i><span>Từ 100-1000</span></div>
        <div class="key c"><i></i><span>Từ 10-100</span></div>
        <div class="key d"><i></i><span>Từ 1-10</span></div>
      </aside>
    </section>
  </div>
  <div class="scroll"><svg viewBox="0 0 20 21"><path d="M5 13.500h10l-5-5z" fill="#a3a3a3"/></svg><i></i><svg viewBox="0 0 20 21"><path d="M5.500 8h9L10 12.500z" fill="#505050"/></svg></div>
</main>

<footer class="taskbar">
  <div class="sys">
    <svg viewBox="0 0 30 30"><path d="m5 7.800 8-1.100V14.500H5zM14 6.500 25 5v9.500H14zM5 15.500h8v8L5 22.400zM14 15.500h11V25L14 23.500z" fill="#fff"/></svg>
    <svg viewBox="0 0 30 30"><g fill="none" stroke="#fff" stroke-width="1.400"><circle cx="17.500" cy="12" r="7"/><path d="M12.500 17 5 25"/></g></svg>
    <svg viewBox="0 0 30 30"><path d="M5 5v3.500h12V5M5 24v-3.500h12V24M5 11h12v7.500H5zM23.500 5v20" fill="none" stroke="#fff" stroke-width="1.300"/><path d="M21.800 11.500h3.400v3h-3.400z" fill="#fff"/></svg>
  </div>
  <div class="apps">
    <span><svg viewBox="0 0 30 30"><path d="M3 12.500C5 6 9 2.500 15.500 2.500 23 2.500 27.500 8 27.500 15v3H11.300c.2 4 3.700 5.800 8 5.800 3 0 5.400-.8 7-1.700v5c-2 1-4.900 1.700-8.200 1.700C10.500 28.800 5.500 24.500 5.500 18c0-4.500 2.800-8 6.500-9.500-4 .5-7 2-9 4zM11.400 14h9.800c0-3-1.700-4.900-4.600-4.900-3 0-4.800 2-5.200 4.900z" fill="#0078d7" fill-rule="evenodd"/></svg></span>
    <span><svg viewBox="0 0 30 30"><path d="M1 3h11l2 3h13v5H1z" fill="#dd9b0e"/><path d="M1 7h12l2-2h14v21H1z" fill="#ffd060"/><path d="M6 26V17a2 2 0 0 1 2-2h14a2 2 0 0 1 2 2v9h-4v-5H10v5z" fill="#3d8fdb"/></svg></span>
    <span><svg viewBox="0 0 30 30"><path d="M10 9V5a5 5 0 0 1 9 0v4M13 9V4a4 4 0 0 1 7 0v5" fill="none" stroke="#ccc" stroke-width="1.300"/><path d="M.5 7h29v22H.5z" fill="#fff"/><path d="M8.500 12h6v6h-6z" fill="#f25022"/><path d="M15.500 12h6v6h-6z" fill="#7fba00"/><path d="M8.500 19h6v5.500h-6z" fill="#00a4ef"/><path d="M15.500 19h6v5.500h-6z" fill="#ffb900"/></svg></span>
    <span class="open"><svg viewBox="0 0 30 30"><path d="M22 .5V8L5.500 20.500 2.500 22 0 19.500z" fill="#0a6db3"/><path d="M22 29.500V22L5.500 9.500 2.500 8 0 10.500z" fill="#128bd6"/><path d="M22 0l8 3.500v23L22 30z" fill="#29a8ee"/></svg></span>
    <span><svg viewBox="0 0 30 30"><path d="M0 11 15 2l15 9v15H0z" fill="#fff"/><path d="M2 11.500h26L19 17l5 5-9-5z" fill="#1b2a2f"/></svg></span>
    <span class="open current"><svg viewBox="0 0 28 28"><circle cx="14" cy="14" r="14" fill="#169e58"/><path d="M14 14 1.900 7A14 14 0 0 1 26.100 7z" fill="#dd4b3e"/><path d="M14 14V7h12.100A14 14 0 0 1 14 28l6-10.500z" fill="#ffce43"/><circle cx="14" cy="14" r="6.500" fill="#fff"/><circle cx="14" cy="14" r="5.200" fill="#4687f4"/></svg></span>
  </div>
  <div class="tray">
    <svg class="t1" viewBox="0 0 20 20"><path d="M2 14l8-8 8 8" fill="none" stroke="#fff" stroke-width="1.400"/></svg>
    <svg class="t2" viewBox="0 0 20 16"><path d="M5 8v5.500h13.500V3H8M18.500 6.500h1.500v3h-1.500M3 7v6M0.500 3h5v3l-1.500 1.500H2L.5 6zM1.500 3V.5m3 2.500V.5" fill="none" stroke="#fff" stroke-width="1.200"/></svg>
    <svg class="t3" viewBox="0 0 16 16"><g fill="none" stroke="#bfc6c8" stroke-width="1.200"><path d="M1 15C1 7 7 1 15 1M4.500 15C4.500 9 9 4.500 15 4.500M8 15c0-4 3-7 7-7M11 15c0-2 2-4 4-4"/></g><circle cx="14" cy="14" r="1.500" fill="#fff"/></svg>
    <svg class="t4" viewBox="0 0 19 14"><path d="M.7 4.500h2.500L7 1v12L3.200 9.500H.7zM11 4l6.500 6.500m0-6.500L11 10.500" fill="none" stroke="#fff" stroke-width="1.200"/></svg>
    <span class="lang">ENG<br>US</span><span class="clock">10:46 AM<br>2/14/2020</span>
    <div class="note"><svg viewBox="0 0 20 20"><path d="M0 0h20v15h-8l-3 4-3-4H0z" fill="#fff"/><path d="M4 4.500h12M4 8h12M4 11.500h8" stroke="#1b2a2f" stroke-width="1.200"/></svg><b>2</b></div>
  </div>
</footer>
</body>
</html>
```
FILE: styles.css
```css
* { box-sizing: border-box; margin: 0; padding: 0; }
body { width: 1920px; height: 1080px; overflow: hidden; display: flex; flex-direction: column; background: #000; color: #fff; font-family: Inter, "Noto Sans", sans-serif; font-weight: 300; }
svg { display: block; flex: none; fill: currentColor; }
i { font-style: normal; }
.defs { position: absolute; }

/* browser frame */
.tabstrip { height: 42px; flex: none; background: #dee1e6; display: flex; align-items: center; color: #45494d; font: 400 14.500px/20px "Open Sans", "Noto Sans", sans-serif; padding-left: 11px; }
.tab { width: 299px; height: 42px; display: flex; align-items: center; padding: 0 14px; position: relative; }
.tab:not(.last):not(.active)::after { content: ""; position: absolute; right: 0; top: 9px; width: 1px; height: 25px; background: #85888c; }
.tab:nth-child(2), .tab:nth-child(3) { width: 298.500px; }
.tab.last { width: 298px; }
.tab.active { width: 300px; background: #fff; border-radius: 10px 10px 0 0; }
.fav { width: 20px; height: 20px; color: #1b1f23; margin-right: 10px; }
.tab-title { flex: 1; min-width: 0; white-space: nowrap; margin-right: 4px; letter-spacing: -.25px; }
.fade { -webkit-mask-image: linear-gradient(90deg, #000 88%, transparent 100%); mask-image: linear-gradient(90deg, #000 88%, transparent 100%); }
.close { width: 12px; height: 12px; color: #3c4043; }
.newtab { width: 15px; height: 15px; margin-left: 20px; }
.winctl { display: flex; gap: 43px; margin-left: auto; margin-right: 22px; margin-top: -5px; }
.winctl svg { width: 14px; height: 14px; }

.toolbar { height: 47px; flex: none; background: #fff; border-bottom: 2px solid #d9dae0; display: flex; align-items: center; padding: 0 17px 0 18px; }
.nav { width: 20px; height: 20px; margin-right: 20px; }
.omnibox { width: 1434px; height: 35px; background: #f1f3f4; border-radius: 18px; display: flex; align-items: center; padding: 0 13px 0 17px; margin-left: -3px; }
.lock { width: 11px; height: 15px; margin-right: 15px; }
.url { font: 400 16px/24px "Open Sans", "Noto Sans", sans-serif; color: #202124; letter-spacing: .16px; flex: 1; }
.star { width: 20px; height: 20px; }
.exts { display: flex; gap: 20px; margin-left: 17px; }
.exts svg { width: 20px; height: 20px; }
.tb-sep { width: 1px; height: 20px; background: #c8cacd; margin-left: 18px; }
.avatar { width: 28px; height: 28px; border-radius: 50%; background: #0559a5; font: 400 15px/28px Roboto, sans-serif; text-align: center; margin-left: 14px; }
.warn { width: 20px; height: 20px; border-radius: 50%; background: #f59b00; font: 900 15px/20px Roboto, sans-serif; text-align: center; margin-left: 16px; }

.viewport { height: 941px; flex: none; display: flex; overflow: hidden; }
.page { width: 1899px; padding: 13px 12px 0 13px; }
.scroll { width: 21px; background: #f1f1f1; display: flex; flex-direction: column; padding-right: 1px; }
.scroll i { height: 723px; margin: 0 1px 0 2px; background: #c1c1c1; }
.scroll svg { width: 20px; height: 21px; }
.scroll svg:last-child { margin-top: auto; }

/* banner */
.banner { height: 112px; background: #212121; border: 1px solid #808080; display: flex; font-size: 18.500px; line-height: 28px; letter-spacing: .390px; }
.brand { width: 343px; padding: 11px 0 0 37px; }
.brand span { display: block; font-size: 18px; letter-spacing: .8px; margin: -1px 0 0 1px; }
.logo { width: 63px; height: 63px; border: 1px solid #fff; border-radius: 12px; letter-spacing: 0; }
.logo-name { font: 900 10px Inter, sans-serif; fill: #fff; stroke: #222; stroke-width: 1.500; paint-order: stroke; }
.logo-sub { font: 700 4px Inter, sans-serif; fill: #e08a20; }
h1 { width: 458px; font-size: 28px; line-height: 34px; font-weight: 500; padding-top: 28px; white-space: nowrap; letter-spacing: .75px; }
.actions { width: 447px; display: flex; gap: 13px; padding-top: 40px; letter-spacing: 0; }
.btn { height: 30px; border-radius: 5px; display: flex; align-items: center; font-size: 13px; font-weight: 700; line-height: 30px; padding: 3px 12px 0; white-space: nowrap; }
.btn svg { width: 20px; height: 16px; margin: -3px 5px 0 0; }
.blue { background: #4169e1; width: 92px; }
.tomato { background: #ff6347; width: 150px; }
.tomato svg { height: 20px; width: 18px; margin-right: 6px; }
.info { padding: 12px 0 0 13px; white-space: nowrap; }
.info p { display: flex; align-items: center; }
.info svg { width: 18px; height: 18px; margin: 2px 6px 0 0; }
.info .source { letter-spacing: .490px; }
.info a { color: #1768f2; letter-spacing: .950px; }

/* board */
.board { margin-top: 13px; height: 900px; display: grid; grid-template-columns: 468px 937px 469px; font-size: 18.500px; line-height: 28px; letter-spacing: .85px; }
.col { background: #212121; border: 1px solid #808080; }
.ic { width: 19px; height: 19px; margin-right: 5px; display: inline-block; vertical-align: -5px; }
.switch { display: flex; }
.switch a { display: flex; align-items: center; white-space: nowrap; padding-bottom: 1px; }
.on { width: 129px; background: #dbdfe5; color: #212529; border-radius: 4px 0 0 4px; padding-left: 16px; letter-spacing: .75px; }
.off { background: #343a40; border-radius: 0 5px 5px 0; padding-left: 15px; }
.flag { width: 25px; height: 18px; background: #da251d; color: #ff0; font: 9px/18px "DejaVu Sans", sans-serif; text-align: center; letter-spacing: 0; margin: 2px 6px 0 0; }
.switch .ic { margin: 2px 4px 0 0; }
.left { padding: 25px 0 0 31px; }
.left .switch { height: 45px; }
.vn { width: 150px; letter-spacing: 1.200px; }
.legend { height: 48px; display: flex; align-items: center; font-size: 12.800px; letter-spacing: .3px; padding-left: 42px; white-space: nowrap; }
.legend span { margin: 0 0 0 7px; }
.legend .bd { padding: 0 6.500px; height: 22px; margin-top: 1px; }
.k1 { width: 101px; }
.k2 { width: 74px; }
.bd { justify-self: start; height: 21px; border-radius: 4px; padding: 0 5.500px; font-size: 13.800px; line-height: 22px; font-weight: 800; letter-spacing: 0; }
.g { background: #343a40; }
.r { background: #dc3545; }
.v { background: #28a745; }
h2 { font-size: 19px; font-weight: 700; line-height: 28px; letter-spacing: .82px; margin-top: 12px; white-space: nowrap; }
h2 .ic { margin-right: 5px; }
.stats { margin-top: 13px; padding-left: 1px; display: grid; grid-template-columns: 123px 72px 60px 80px; grid-auto-rows: 30px; align-items: center; line-height: 30px; letter-spacing: 1.200px; }
.stats span { margin-top: -2px; }
.stats .tight { letter-spacing: .75px; }
.stats .bd { margin-top: 0; }

.mid { padding: 11px 0 0 32px; }
.map-title { padding-left: 278px; }
.mid .switch { height: 46px; margin-top: 21px; }
.on.wide { width: 175px; }
.prov { width: 298px; letter-spacing: .93px; }
.prov .flag { margin-right: 11px; }
.map { width: 872px; height: 695px; margin-top: 1px; }
.sea, .lake { fill: #091116; }
.land { fill: #1b2436; }
.border { fill: none; stroke: #a9adb4; stroke-width: 3; stroke-linejoin: round; }
.lb { font: 500 44px Roboto, sans-serif; letter-spacing: 0; fill: #c9c9c9; stroke: #0d1116; stroke-width: 9; paint-order: stroke; stroke-linejoin: round; }
.lb .s { font-size: 37px; }
.water { font: italic 400 43px Roboto, sans-serif; fill: #183a58; letter-spacing: 0; }
.water .ocean { font-size: 84px; font-weight: 300; }
.cases { fill: #f00; fill-opacity: .3; }

.right { padding: 34px 0 0 13px; white-space: nowrap; }
.right strong { display: block; font-size: 28px; line-height: 34px; font-weight: 600; letter-spacing: -.7px; margin-top: 6px; }
.two { display: grid; grid-template-columns: 200px 200px; height: 93px; }
.three { display: grid; grid-template-columns: 159px 161px 140px; height: 94px; }
.bellic { width: 17px; margin-right: 7px; }
.plus { width: 16px; margin-right: 7px; }
.right h2 { margin: 69px 0 37px 12px; }
.key { display: flex; letter-spacing: .3px; }
.key i { border-radius: 50%; background: #641818; }
.key span { margin-left: 12px; }
.a { height: 138px; }
.a i { width: 125px; height: 125px; }
.a span { padding-top: 48px; }
.b { height: 112px; padding-left: 12px; }
.b i { width: 100px; height: 100px; }
.b span { padding-top: 29px; }
.c { height: 63px; padding-left: 37px; }
.c i { width: 50px; height: 50px; }
.c span { padding-top: 4px; }
.d { padding-left: 47px; }
.d i { width: 25px; height: 25px; }
.d span { margin-top: -9px; }

/* taskbar */
.taskbar { height: 50px; flex: none; background: #1b2b30; display: flex; font: 400 14px/22px "Open Sans", "Noto Sans", sans-serif; }
.sys, .apps { display: flex; }
.sys { width: 183px; padding: 10px 0 0 15px; gap: 30px; }
.sys svg { width: 30px; height: 30px; }
.apps span { width: 62px; display: flex; justify-content: center; padding-top: 10px; }
.apps svg { width: 30px; height: 30px; }
.apps .open { border-bottom: 3px solid #76b9ed; width: 52px; margin: 0 5px; }
.apps .current { background: #4b5a5f; width: 61px; margin: 0; }
.apps .current svg { width: 28px; height: 28px; }
.tray { margin-left: auto; margin-right: 5px; padding-right: 9px; border-right: 1px solid #6b777b; display: flex; align-items: center; text-align: center; }
.t1 { width: 20px; height: 20px; margin-right: 11px; }
.t2 { width: 20px; height: 16px; margin-right: 12px; }
.t3 { width: 16px; height: 16px; margin-right: 11px; }
.t4 { width: 19px; height: 14px; margin-right: 4px; }
.lang { width: 50px; }
.clock { width: 78px; letter-spacing: 0; white-space: nowrap; }
.lang, .clock { line-height: 23px; padding-top: 0; }
.note { width: 54px; height: 50px; padding: 15px 0 0 18px; position: relative; }
.note svg { width: 20px; height: 20px; }
.note b { position: absolute; left: 27px; top: 24px; width: 21px; height: 21px; border: 1px solid #8b9497; border-radius: 50%; background: #2c3538; font: 600 14px/19px "Open Sans", sans-serif; }
```
